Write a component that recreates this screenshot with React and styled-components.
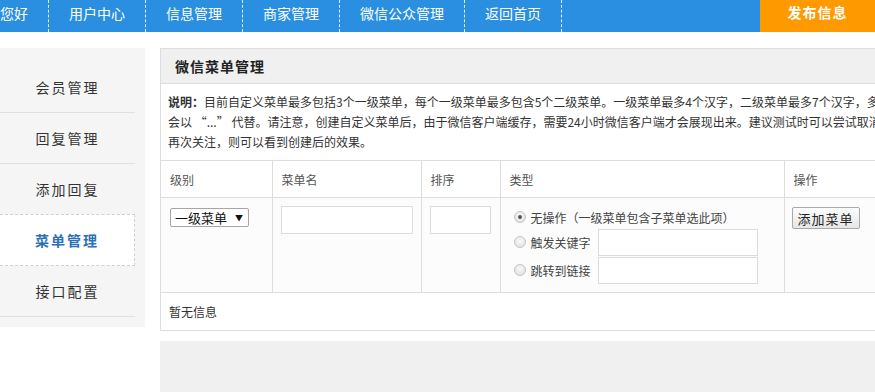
import React from "react";
import styled, { createGlobalStyle } from "styled-components";

const GlobalStyle = createGlobalStyle`
  html, body {
    margin: 0;
    padding: 0;
    background: #fff;
    overflow: hidden;
  }
  body {
    font-family: "Noto Sans CJK SC", "Noto Sans", "Liberation Sans", sans-serif;
    color: #333;
  }
`;

const navItems = ["您好", "用户中心", "信息管理", "商家管理", "微信公众管理", "返回首页"];
const sideItems = ["会员管理", "回复管理", "添加回复", "菜单管理", "接口配置"];

const App = () => {
  return (
    <>
      <GlobalStyle />
      <Page>
        <Nav>
          {navItems.map((item, i) => (
            <NavItem key={item} $first={i === 0}>
              {item}
            </NavItem>
          ))}
          <Publish>发布信息</Publish>
        </Nav>
        <Content>
          <Sidebar>
            {sideItems.map((item) => (
              <SideItem key={item} $active={item === "菜单管理"}>
                {item}
              </SideItem>
            ))}
          </Sidebar>
          <Main>
            <Panel>
              <PanelHead>微信菜单管理</PanelHead>
              <Notice>
                <NoticeLine>
                  <b>说明：</b>目前自定义菜单最多包括3个一级菜单，每个一级菜单最多包含5个二级菜单。一级菜单最多4个汉字，二级菜单最多7个汉字，多出来的部分将
                </NoticeLine>
                <NoticeLine>
                  会以 “...” 代替。请注意，创建自定义菜单后，由于微信客户端缓存，需要24小时微信客户端才会展现出来。建议测试时可以尝试取消关注公众账号后
                </NoticeLine>
                <NoticeLine>再次关注，则可以看到创建后的效果。</NoticeLine>
              </Notice>
              <Table>
                <colgroup>
                  <col style={{ width: 111 }} />
                  <col style={{ width: 149 }} />
                  <col style={{ width: 79 }} />
                  <col style={{ width: 284 }} />
                  <col />
                </colgroup>
                <thead>
                  <tr>
                    <Th>级别</Th>
                    <Th>菜单名</Th>
                    <Th>排序</Th>
                    <Th>类型</Th>
                    <Th>操作</Th>
                  </tr>
                </thead>
                <tbody>
                  <tr>
                    <Td>
                      <FakeSelect>
                        一级菜单<Caret>▼</Caret>
                      </FakeSelect>
                    </Td>
                    <Td $pl={8}>
                      <TextBox $w={132} $h={28} />
                    </Td>
                    <Td $pl={8}>
                      <TextBox $w={61} $h={28} />
                    </Td>
                    <Td $pl={13}>
                      <Option $h={22}>
                        <Radio $checked />
                        无操作（一级菜单包含子菜单选此项）
                      </Option>
                      <Option $h={28}>
                        <Radio />
                        <OptLabel>触发关键字</OptLabel>
                        <TextBox $w={160} $h={27} />
                      </Option>
                      <Option $h={28}>
                        <Radio />
                        <OptLabel>跳转到链接</OptLabel>
                        <TextBox $w={160} $h={27} />
                      </Option>
                    </Td>
                    <Td $pl={7}>
                      <Button>添加菜单</Button>
                    </Td>
                  </tr>
                  <tr>
                    <EmptyCell colSpan={5}>暂无信息</EmptyCell>
                  </tr>
                </tbody>
              </Table>
            </Panel>
            <FootBar />
          </Main>
        </Content>
      </Page>
    </>
  );
};

export default App;

const Page = styled.div`
  width: 875px;
  height: 392px;
  overflow: hidden;
`;

const Nav = styled.div`
  display: flex;
  height: 32px;
  background: #2a8fe0;
`;

const NavItem = styled.div`
  padding: 0 20px;
  padding-left: ${(p) => (p.$first ? "0" : "20px")};
  line-height: 27px;
  font-size: 14px;
  color: #fff;
  white-space: nowrap;
  border-right: 1px dashed rgba(255, 255, 255, 0.85);
`;

const Publish = styled.div`
  margin-left: auto;
  width: 115px;
  background: #ff9900;
  color: #fff;
  font-size: 14px;
  font-weight: bold;
  line-height: 25px;
  text-align: center;
  letter-spacing: 1px;
`;

const Content = styled.div`
  display: flex;
  align-items: flex-start;
  gap: 15px;
  padding-top: 16px;
`;

const Sidebar = styled.div`
  flex: 0 0 145px;
  box-sizing: border-box;
  background: #f5f5f5;
  padding: 14px 10px 10px 0;
`;

const SideItem = styled.div`
  height: 50px;
  line-height: 50px;
  text-align: center;
  font-size: 14px;
  letter-spacing: 2px;
  color: ${(p) => (p.$active ? "#2a6fb8" : "#333")};
  font-weight: ${(p) => (p.$active ? "bold" : "normal")};
  background: ${(p) => (p.$active ? "#fff" : "transparent")};
  border-bottom: ${(p) => (p.$active ? "1px dashed #d0d0d0" : "1px solid #e0e0e0")};
  border-top: ${(p) => (p.$active ? "1px dashed #d0d0d0" : "none")};
  border-right: ${(p) => (p.$active ? "1px dashed #d0d0d0" : "none")};
  margin-top: ${(p) => (p.$active ? "-1px" : "0")};
`;

const Main = styled.div`
  flex: 0 0 800px;
`;

const Panel = styled.div`
  border: 1px solid #dddddd;
`;

const PanelHead = styled.div`
  height: 34px;
  line-height: 34px;
  padding-left: 14px;
  background: #f0f0f0;
  border-bottom: 1px solid #dddddd;
  font-size: 14px;
  font-weight: bold;
  letter-spacing: 1px;
  color: #222;
`;

const Notice = styled.div`
  padding: 8px 7px 8px;
  font-size: 12px;
  color: #333;
`;

const NoticeLine = styled.div`
  line-height: 20px;
  white-space: nowrap;
`;

const Table = styled.table`
  width: 100%;
  table-layout: fixed;
  border-collapse: collapse;
  font-size: 12px;
`;

const Th = styled.th`
  height: 37px;
  padding: 0 9px;
  box-sizing: border-box;
  text-align: left;
  font-weight: normal;
  color: #555;
  background: #fff;
  border-top: 1px solid #dddddd;
  border-bottom: 1px solid #dddddd;
  & + & {
    border-left: 1px solid #dddddd;
  }
`;

const Td = styled.td`
  height: 95px;
  box-sizing: border-box;
  vertical-align: top;
  padding: 8px 9px 0 ${(p) => (p.$pl ? `${p.$pl}px` : "9px")};
  background: #fcfcfc;
  border-bottom: 1px solid #dddddd;
  & + & {
    border-left: 1px solid #dddddd;
  }
`;

const EmptyCell = styled.td`
  height: 37px;
  padding: 0 8px;
  font-size: 12px;
  color: #333;
  background: #fff;
`;

const FakeSelect = styled.div`
  display: inline-flex;
  align-items: center;
  justify-content: space-between;
  box-sizing: border-box;
  width: 79px;
  height: 19px;
  margin-top: 2px;
  padding: 0 5px 0 4px;
  border: 1px solid #a6a6a6;
  border-radius: 2px;
  background: #fff;
  font-size: 13px;
  color: #111;
`;

const Caret = styled.span`
  font-size: 8px;
  color: #111;
`;

const TextBox = styled.div`
  box-sizing: border-box;
  width: ${(p) => p.$w}px;
  height: ${(p) => p.$h}px;
  border: 1px solid #dcdcdc;
  background: #fff;
`;

const Option = styled.div`
  display: flex;
  align-items: center;
  height: ${(p) => p.$h}px;
  font-size: 12px;
  color: #444;
  white-space: nowrap;
`;

const Radio = styled.span`
  position: relative;
  flex: 0 0 auto;
  box-sizing: border-box;
  width: 12px;
  height: 12px;
  margin-right: 5px;
  border-radius: 50%;
  border: 1px solid #c4c4c4;
  background: radial-gradient(circle at 50% 40%, #fafafa, #dcdcdc);
  &::after {
    content: "";
    display: ${(p) => (p.$checked ? "block" : "none")};
    position: absolute;
    left: 3px;
    top: 3px;
    width: 4px;
    height: 4px;
    border-radius: 50%;
    background: #555;
  }
`;

const OptLabel = styled.span`
  width: 67px;
`;

const Button = styled.div`
  display: inline-flex;
  align-items: center;
  justify-content: center;
  box-sizing: border-box;
  width: 68px;
  height: 22px;
  margin-top: 1px;
  border: 1px solid #a9a9a9;
  border-radius: 2px;
  background: linear-gradient(#fdfdfd, #e6e6e6);
  font-size: 13px;
  letter-spacing: 1px;
  color: #222;
`;

const FootBar = styled.div`
  height: 60px;
  margin-top: 10px;
  background: #f0f0f0;
`;
